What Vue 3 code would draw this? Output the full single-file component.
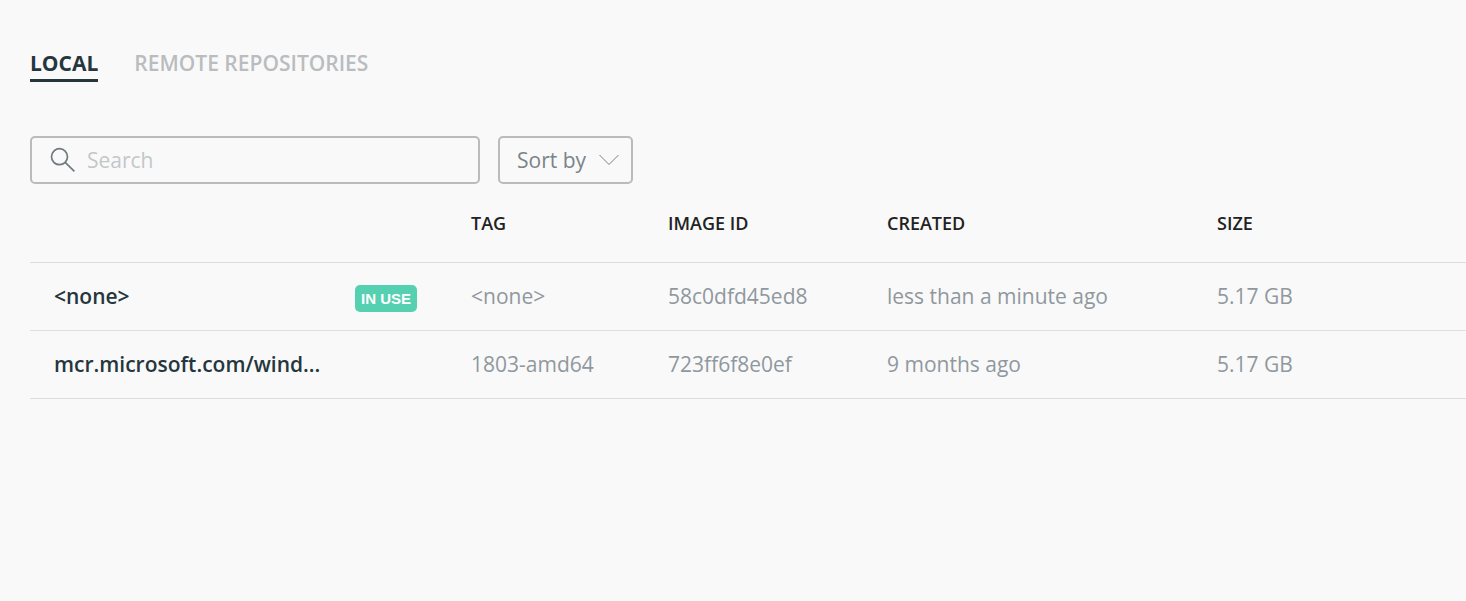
<script setup>
import { ref } from 'vue'

const search = ref('')
const sort = ref('')
const images = [
  { name: '<none>', inUse: true, tag: '<none>', id: '58c0dfd45ed8', created: 'less than a minute ago', size: '5.17 GB' },
  { name: 'mcr.microsoft.com/wind...', inUse: false, tag: '1803-amd64', id: '723ff6f8e0ef', created: '9 months ago', size: '5.17 GB' },
]
</script>

<template>
  <main class="page">
    <nav class="tabs" aria-label="Image source">
      <a href="#local" class="tab active" aria-current="page">LOCAL</a>
      <a href="#remote" class="tab">REMOTE REPOSITORIES</a>
    </nav>
    <div class="toolbar">
      <label class="search">
        <svg class="search-icon" viewBox="0 0 26 26" aria-hidden="true">
          <circle cx="9.5" cy="9.7" r="8" />
          <path d="M15.2 15.4L24.4 24.4" />
        </svg>
        <input v-model="search" type="text" placeholder="Search" aria-label="Search">
      </label>
      <div class="sort">
        <select v-model="sort" aria-label="Sort by">
          <option value="">Sort by</option>
          <option value="name">Name</option>
          <option value="size">Size</option>
        </select>
        <svg class="chevron" viewBox="0 0 20 12" aria-hidden="true"><path d="M0.5 1L10 10.5L19.5 1" /></svg>
      </div>
    </div>
    <table class="images">
      <thead>
        <tr>
          <th class="name-col" aria-label="Name"></th>
          <th class="tag-col">TAG</th>
          <th class="id-col">IMAGE ID</th>
          <th class="created-col">CREATED</th>
          <th>SIZE</th>
        </tr>
      </thead>
      <tbody>
        <tr v-for="image in images" :key="image.id">
          <td>
            <div class="name-cell">
              <span class="name">{{ image.name }}</span>
              <span v-if="image.inUse" class="badge">IN USE</span>
            </div>
          </td>
          <td>{{ image.tag }}</td>
          <td>{{ image.id }}</td>
          <td>{{ image.created }}</td>
          <td>{{ image.size }}</td>
        </tr>
      </tbody>
    </table>
  </main>
</template>

<style>
body {
  background: #f9f9f9;
}
</style>

<style scoped>
.page {
  padding: 48px 0 0 30px;
  font-family: "Open Sans", sans-serif;
  font-size: 21px;
  color: #8f989e;
}
.tabs {
  display: flex;
  gap: 36px;
}
.tab {
  font-weight: 600;
  line-height: 31px;
  color: #babdbf;
  text-decoration: none;
  border-bottom: 3px solid transparent;
}
.tab.active {
  font-weight: 700;
  color: #25363d;
  border-color: #25363d;
}
.toolbar {
  display: flex;
  gap: 18px;
  margin-top: 54px;
}
.search,
.sort {
  box-sizing: border-box;
  height: 48px;
  border: 2px solid #bbb;
  border-radius: 5px;
}
.search {
  display: flex;
  align-items: center;
  gap: 11px;
  width: 450px;
  padding: 0 18px;
}
.search-icon {
  flex: none;
  width: 26px;
  height: 26px;
  fill: none;
  stroke: #6f797e;
  stroke-width: 1.7;
}
input,
select {
  min-width: 0;
  padding: 0;
  border: 0;
  outline: 0;
  background: transparent;
  font: inherit;
}
input {
  flex: 1;
  color: #25363d;
}
input::placeholder {
  color: #c4c7c9;
}
.sort {
  display: grid;
  align-items: center;
  width: 135px;
}
.sort > * {
  grid-area: 1 / 1;
}
select {
  width: 100%;
  height: 44px;
  padding-left: 17px;
  appearance: none;
  color: #7b8487;
}
.chevron {
  justify-self: end;
  width: 20px;
  height: 12px;
  margin-right: 12px;
  fill: none;
  stroke: #6f8292;
  pointer-events: none;
}
.images {
  width: 100%;
  border-collapse: collapse;
  table-layout: fixed;
}
th,
td {
  padding: 0;
  text-align: left;
  border-bottom: 1px solid #dcdedf;
}
th {
  height: 78px;
  font-size: 18px;
  font-weight: 600;
  color: #222;
}
td {
  height: 67px;
  line-height: 31px;
}
.name-col {
  width: 441px;
}
.tag-col {
  width: 197px;
}
.id-col {
  width: 219px;
}
.created-col {
  width: 330px;
}
.name-cell {
  display: flex;
  align-items: flex-end;
  justify-content: space-between;
  padding: 0 54px 0 24px;
}
.name {
  font-weight: 600;
  color: #25363d;
}
.badge {
  padding: 0 6px;
  border-radius: 5px;
  background: #55d1b1;
  color: #fff;
  font: bold 15px/27px "Liberation Sans", Arial, sans-serif;
}
</style>
